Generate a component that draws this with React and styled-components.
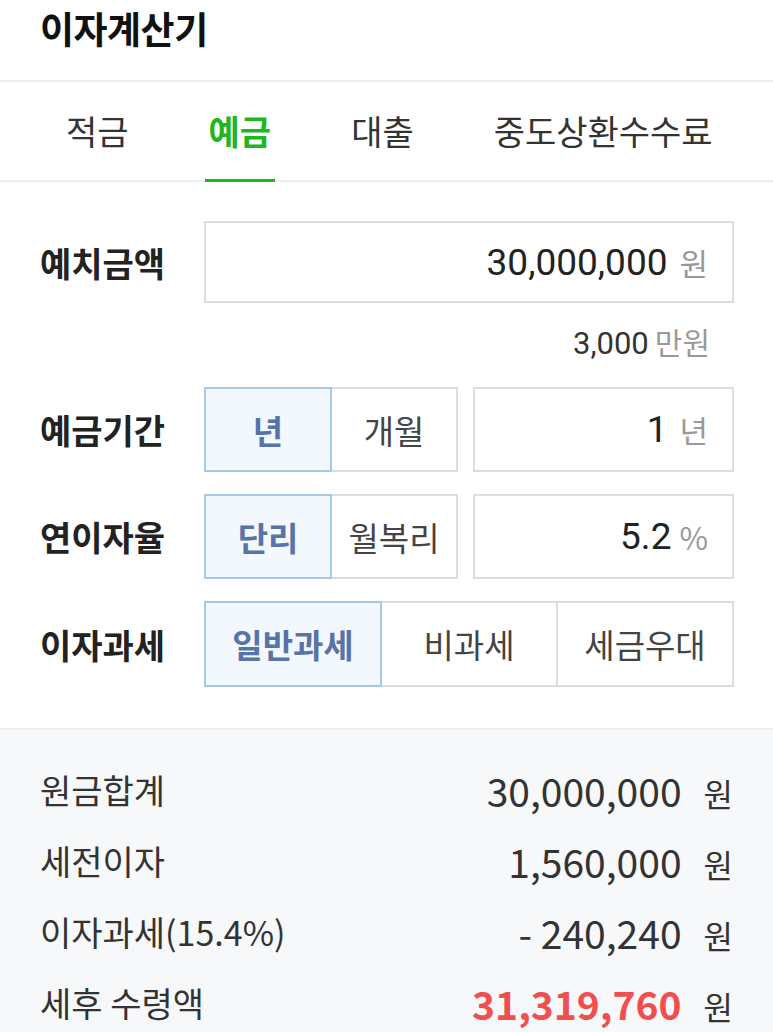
import React, { useState } from "react";
import styled, { createGlobalStyle } from "styled-components";

const GlobalStyle = createGlobalStyle`
  * { box-sizing: border-box; }
  body {
    margin: 0;
    background: #fff;
    font-family: "Noto Sans CJK KR", "Noto Sans", sans-serif;
    color: #222;
    overflow: hidden;
  }
`;

const Page = styled.div`
  width: 773px;
  background: #fff;
`;

const Header = styled.header`
  height: 82px;
  padding: 9px 40px 0;
  border-bottom: 2px solid #eeeeee;

  h1 {
    margin: 0;
    font-size: 37px;
    line-height: 38px;
    font-weight: 700;
    color: #111;
    letter-spacing: -0.5px;
  }
`;

const TabBar = styled.nav`
  display: flex;
  gap: 72px;
  height: 100px;
  padding-left: 62px;
  border-bottom: 2px solid #eeeeee;
`;

const Tab = styled.button`
  display: flex;
  align-items: center;
  padding: 0 4px;
  margin-bottom: -2px;
  border: 0;
  border-bottom: 3px solid ${(p) => (p.$active ? "#1fb71f" : "transparent")};
  background: none;
  font-family: inherit;
  font-size: 34px;
  font-weight: ${(p) => (p.$active ? 700 : 400)};
  color: ${(p) => (p.$active ? "#1fb71f" : "#333")};
  cursor: pointer;
`;

const Form = styled.section`
  display: flex;
  flex-direction: column;
  gap: 22px;
  padding: 39px 39px 41px 40px;
`;

const Field = styled.div`
  display: flex;
  flex-direction: column;
`;

const Row = styled.div`
  display: flex;
  align-items: center;
  height: ${(p) => p.$h || 85}px;
`;

const Label = styled.div`
  width: 164px;
  flex-shrink: 0;
  font-size: 34px;
  font-weight: 700;
  color: #222;
`;

const Controls = styled.div`
  display: flex;
  flex: 1;
  gap: 15px;
  height: 100%;
`;

const SegGroup = styled.div`
  display: flex;
  width: ${(p) => (p.$full ? "100%" : "254px")};
  height: 100%;
`;

const Segment = styled.button`
  position: relative;
  z-index: ${(p) => (p.$active ? 1 : 0)};
  flex: 1;
  margin-left: -2px;
  border: 2px solid ${(p) => (p.$active ? "#a8c8ea" : "#dddddd")};
  background: ${(p) => (p.$active ? "#f3f8fe" : "#fff")};
  font-family: inherit;
  font-size: 33px;
  font-weight: ${(p) => (p.$active ? 700 : 400)};
  color: ${(p) => (p.$active ? "#5873a8" : "#444")};
  cursor: pointer;

  &:first-child {
    margin-left: 0;
  }
`;

const InputBox = styled.div`
  display: flex;
  flex: 1;
  align-items: center;
  justify-content: flex-end;
  height: 100%;
  padding-right: 24px;
  border: 2px solid #dddddd;
  background: #fff;
`;

const Value = styled.span`
  font-family: Roboto, "Noto Sans CJK KR", sans-serif;
  font-size: 37px;
  color: #222;
`;

const Unit = styled.span`
  margin-left: ${(p) => p.$gap || 12}px;
  font-size: 31px;
  color: #999;
`;

const Hint = styled.div`
  padding: 14px 24px 0 0;
  height: 62px;
  line-height: 48px;
  text-align: right;

  b {
    font-family: Roboto, "Noto Sans CJK KR", sans-serif;
    font-weight: 400;
    font-size: 31px;
    color: #333;
  }

  span {
    margin-left: 6px;
    font-size: 30px;
    color: #999;
  }
`;

const Result = styled.section`
  padding: 24px 40px 0;
  min-height: 310px;
  background: #f7f8fa;
  border-top: 2px solid #eef0f2;
`;

const ResultRow = styled.div`
  display: flex;
  align-items: center;
  justify-content: space-between;
  height: 71px;
`;

const ResultLabel = styled.span`
  font-size: 34px;
  color: #333;
`;

const ResultValue = styled.span`
  display: flex;
  align-items: baseline;

  strong {
    font-size: 39px;
    font-weight: ${(p) => (p.$highlight ? 700 : 400)};
    color: ${(p) => (p.$highlight ? "#f04f50" : "#333")};
  }

  span {
    margin-left: 22px;
    font-size: 32px;
    color: #333;
  }
`;

const tabs = ["적금", "예금", "대출", "중도상환수수료"];

const results = [
  { label: "원금합계", value: "30,000,000" },
  { label: "세전이자", value: "1,560,000" },
  { label: "이자과세(15.4%)", value: "- 240,240" },
  { label: "세후 수령액", value: "31,319,760", highlight: true },
];

export default function App() {
  const [tab, setTab] = useState("예금");
  const [period, setPeriod] = useState("년");
  const [rateType, setRateType] = useState("단리");
  const [tax, setTax] = useState("일반과세");

  return (
    <Page>
      <GlobalStyle />
      <Header>
        <h1>이자계산기</h1>
      </Header>

      <TabBar>
        {tabs.map((t) => (
          <Tab key={t} $active={t === tab} onClick={() => setTab(t)}>
            {t}
          </Tab>
        ))}
      </TabBar>

      <Form>
        <Field>
          <Row $h={82}>
            <Label>예치금액</Label>
            <InputBox>
              <Value>30,000,000</Value>
              <Unit>원</Unit>
            </InputBox>
          </Row>
          <Hint>
            <b>3,000</b>
            <span>만원</span>
          </Hint>
        </Field>

        <Row>
          <Label>예금기간</Label>
          <Controls>
            <SegGroup>
              {["년", "개월"].map((o) => (
                <Segment key={o} $active={o === period} onClick={() => setPeriod(o)}>
                  {o}
                </Segment>
              ))}
            </SegGroup>
            <InputBox>
              <Value>1</Value>
              <Unit>{period}</Unit>
            </InputBox>
          </Controls>
        </Row>

        <Row>
          <Label>연이자율</Label>
          <Controls>
            <SegGroup>
              {["단리", "월복리"].map((o) => (
                <Segment key={o} $active={o === rateType} onClick={() => setRateType(o)}>
                  {o}
                </Segment>
              ))}
            </SegGroup>
            <InputBox>
              <Value>5.2</Value>
              <Unit $gap={8}>%</Unit>
            </InputBox>
          </Controls>
        </Row>

        <Row $h={86}>
          <Label>이자과세</Label>
          <Controls>
            <SegGroup $full>
              {["일반과세", "비과세", "세금우대"].map((o) => (
                <Segment key={o} $active={o === tax} onClick={() => setTax(o)}>
                  {o}
                </Segment>
              ))}
            </SegGroup>
          </Controls>
        </Row>
      </Form>

      <Result>
        {results.map((r) => (
          <ResultRow key={r.label}>
            <ResultLabel>{r.label}</ResultLabel>
            <ResultValue $highlight={r.highlight}>
              <strong>{r.value}</strong>
              <span>원</span>
            </ResultValue>
          </ResultRow>
        ))}
      </Result>
    </Page>
  );
}
